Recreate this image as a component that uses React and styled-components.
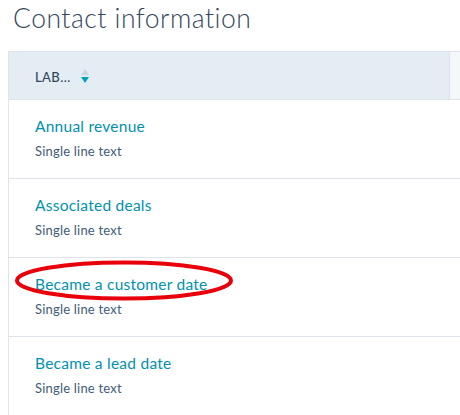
import React from "react";
import styled, { createGlobalStyle } from "styled-components";

const GlobalStyle = createGlobalStyle`
  html, body {
    margin: 0;
    padding: 0;
    background: #ffffff;
    overflow: hidden;
  }
  body {
    font-family: "Lato", "Noto Sans", sans-serif;
    color: #33475b;
  }
`;

const rows = [
  { label: "Annual revenue", type: "Single line text" },
  { label: "Associated deals", type: "Single line text" },
  { label: "Became a customer date", type: "Single line text", circled: true },
  { label: "Became a lead date", type: "Single line text" },
];

function App() {
  return (
    <Page>
      <GlobalStyle />
      <Title>Contact information</Title>
      <Table>
        <HeadRow>
          <HeadCell>
            <HeadLabel>LAB...</HeadLabel>
            <SortIcon width="8" height="15" viewBox="0 0 8 15">
              <path d="M4 0 L8 6 L0 6 Z" fill="#cbd6e2" />
              <path d="M0 8 L8 8 L4 14 Z" fill="#00a4bd" />
            </SortIcon>
          </HeadCell>
          <HeadCell $light />
        </HeadRow>
        {rows.map((row) => (
          <Row key={row.label}>
            <LinkWrap>
              <Link>{row.label}</Link>
              {row.circled && (
                <Circle width="220" height="42" viewBox="0 0 220 42">
                  <ellipse
                    cx="110"
                    cy="20.5"
                    rx="107"
                    ry="18"
                    fill="none"
                    stroke="#e8000b"
                    strokeWidth="4"
                  />
                </Circle>
              )}
            </LinkWrap>
            <TypeText>{row.type}</TypeText>
          </Row>
        ))}
      </Table>
    </Page>
  );
}

const Page = styled.div`
  width: 460px;
  height: 415px;
  overflow: hidden;
`;

const Title = styled.h1`
  margin: 0;
  padding: 1px 0 0 13px;
  height: 51px;
  box-sizing: border-box;
  font-size: 26.5px;
  font-weight: 300;
  letter-spacing: 0.5px;
  color: #33475b;
  line-height: 34px;
`;

const Table = styled.div`
  margin-left: 8px;
  width: 480px;
  border-left: 1px solid #dfe3eb;
  border-top: 1px solid #dfe3eb;
`;

const HeadRow = styled.div`
  display: grid;
  grid-template-columns: 440px 1fr;
  height: 47px;
  border-bottom: 1px solid #dfe3eb;
`;

const HeadCell = styled.div`
  display: flex;
  align-items: center;
  gap: 10px;
  padding-left: 26px;
  background: ${(p) => (p.$light ? "#f5f8fa" : "#e5edf4")};
  border-left: ${(p) => (p.$light ? "1px solid #dfe3eb" : "none")};
`;

const HeadLabel = styled.span`
  font-size: 13px;
  font-weight: 500;
  letter-spacing: 0.4px;
  color: #33475b;
  margin-top: 2px;
`;

const SortIcon = styled.svg`
  display: block;
  margin-top: 2px;
`;

const Row = styled.div`
  height: 79px;
  border-bottom: 1px solid #dfe3eb;
  padding: 15px 0 0 26px;
  box-sizing: border-box;
`;

const LinkWrap = styled.div`
  position: relative;
  display: block;
  width: max-content;
  height: 22px;
`;

const Link = styled.span`
  font-size: 15.5px;
  color: #0091ae;
  letter-spacing: 0.25px;
  line-height: 22px;
`;

const Circle = styled.svg`
  position: absolute;
  left: -21px;
  top: -13px;
  overflow: visible;
`;

const TypeText = styled.div`
  margin-top: 5px;
  font-size: 13px;
  line-height: 18px;
  color: #425b76;
  letter-spacing: 0.2px;
`;

export default App;
